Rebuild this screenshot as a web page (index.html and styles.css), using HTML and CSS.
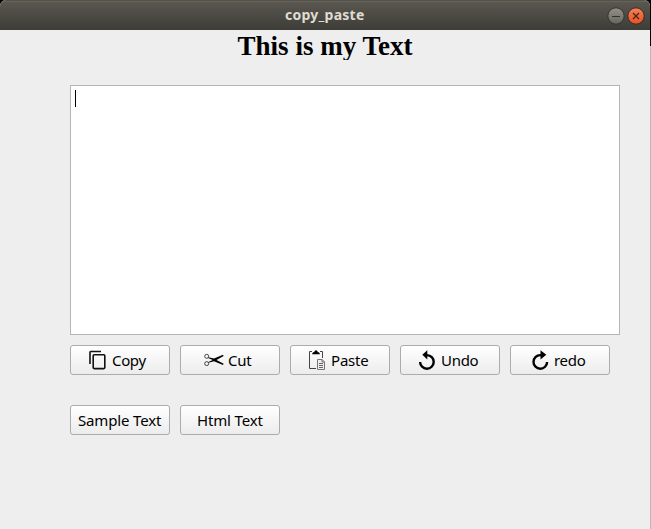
FILE: index.html
```html
<!DOCTYPE html>
<html lang="en">
<head>
<meta charset="utf-8">
<title>copy_paste</title>
<link rel="stylesheet" href="styles.css">
</head>
<body>
<div class="window">
  <header class="titlebar">
    <span class="title">copy_paste</span>
    <div class="controls">
      <svg class="control" viewBox="0 0 18 18"><defs><linearGradient id="g" x2="0" y2="1"><stop stop-color="#92918a"/><stop offset="1" stop-color="#65645e"/></linearGradient></defs><circle cx="9" cy="9" r="8.2" fill="url(#g)" stroke="#33322d"/><path d="M5 9.5h8" stroke="#33322d" stroke-width="1"/></svg>
      <svg class="control" viewBox="0 0 18 18"><defs><linearGradient id="r" x2="0" y2="1"><stop stop-color="#f58158"/><stop offset="1" stop-color="#e6501f"/></linearGradient></defs><circle cx="9" cy="9" r="8.2" fill="url(#r)" stroke="#3a2c25"/><path d="M6 6l6 6M12 6l-6 6" stroke="#40241a" stroke-width="1.2"/></svg>
    </div>
  </header>
  <main class="content">
    <h1 class="heading">This is my Text</h1>
    <div class="editor"><span class="caret"></span></div>
    <div class="row">
      <div class="button copy">
        <svg class="icon" viewBox="0 0 20 20"><path d="M2 14V2.2Q2 1.5 2.7 1.5H13" fill="none" stroke="#111" stroke-width="1.6"/><rect x="5.2" y="4.8" width="11.6" height="13.8" rx="1" fill="none" stroke="#111" stroke-width="1.6"/></svg>
        <span class="label">Copy</span>
      </div>
      <div class="button cut">
        <svg class="icon" viewBox="0 0 20 20"><g fill="none" stroke="#333" stroke-width=".9"><circle cx="2.7" cy="6.3" r="2"/><circle cx="2.7" cy="13.6" r="2"/></g><path d="M4.3 7.2L10 8.6l9-3.9.6 1.2-7.1 4 7.1 3.8-.6 1.2-9-3.7-5.7 1.6.2-.9 4.2-2-4.5-1.8z" fill="#000"/></svg>
        <span class="label">Cut</span>
      </div>
      <div class="button paste">
        <svg class="icon" viewBox="0 0 20 20"><path d="M4 1.5H1.5v17H8M12 1.5h2.5V8" fill="none" stroke="#444"/><path d="M4 4.3l1-2.1h1.2Q6.5.3 8 .3t1.8 1.9H11l1 2.1z" fill="#000"/><path d="M9.5 9.5h4.7l2.3 2.5v7.5h-7z" fill="#eee" stroke="#777"/><path d="M14 9.5V12h2.5" fill="none" stroke="#777"/><path d="M11 13.5h4M11 15.5h4M11 17.5h4" stroke="#666" stroke-width="1"/></svg>
        <span class="label">Paste</span>
      </div>
      <div class="button undo">
        <svg class="icon" viewBox="0 0 20 20"><path d="M9 5.1A6.8 6.8 0 1 1 2.1 11.9" fill="none" stroke="#000" stroke-width="2.4"/><path d="M9.3.2v9.2L4.3 4.8z"/></svg>
        <span class="label">Undo</span>
      </div>
      <div class="button redo">
        <svg class="icon" viewBox="0 0 20 20"><path d="M10.5 5.1H9.2a6.8 6.8 0 1 0 6.9 6.9" fill="none" stroke="#000" stroke-width="2.4"/><path d="M9.5.2v9.2l5.8-4.6z"/></svg>
        <span class="label">redo</span>
      </div>
    </div>
    <div class="row second">
      <div class="button sample"><span class="label">Sample Text</span></div>
      <div class="button html"><span class="label">Html Text</span></div>
    </div>
  </main>
</div>
</body>
</html>
```
FILE: styles.css
```css
* { box-sizing: border-box; }
body {
  margin: 0;
  background: linear-gradient(#000 0 46px, #b8b8b8 46px);
  font: 15px/20px "Noto Sans", sans-serif;
  color: #000;
}
.window { width: 650px; height: 529px; overflow: hidden; background: #eee; border-radius: 6px 6px 0 0; }
.titlebar {
  display: flex;
  align-items: center;
  justify-content: flex-end;
  height: 30px;
  padding-right: 5px;
  border-top: 1px solid #55524a;
  background: linear-gradient(#66635a 0 1px, #5a5750 1px, #3d3c37);
}
.title {
  flex: 1;
  padding: 0 0 2px 285px;
  font: bold 14px/26px "Noto Sans", sans-serif;
  letter-spacing: 0.25px;
  color: #dfdbd2;
}
.controls { display: flex; gap: 2px; }
.control { width: 18px; height: 18px; display: block; }
.content { display: flex; flex-direction: column; }
.heading {
  height: 30px;
  margin: 0 0 25px;
  overflow: hidden;
  font: bold 27px/32px "Liberation Serif", serif;
  text-align: center;
}
.editor { width: 550px; height: 250px; margin-left: 70px; padding: 4px; border: 1px solid #b6b6b6; background: #fff; }
.caret { display: block; width: 1px; height: 17px; background: #000; }
.row { display: flex; gap: 10px; margin: 10px 0 0 70px; }
.second { margin-top: 30px; }
.button {
  display: flex;
  align-items: center;
  width: 100px;
  height: 30px;
  border: 1px solid #acacac;
  border-radius: 3px;
  background: linear-gradient(#fff, #ececec);
  white-space: nowrap;
}
.icon { width: 20px; height: 20px; flex: none; margin-right: 4px; }
.copy { padding-left: 17px; letter-spacing: -0.35px; }
.cut { padding-left: 23px; letter-spacing: -0.3px; }
.paste { padding-left: 17px; letter-spacing: -0.2px; }
.paste .icon { margin-right: 3px; }
.undo { padding-left: 17px; letter-spacing: -0.3px; }
.undo .icon { margin-right: 3px; }
.redo { padding-left: 20px; letter-spacing: -0.3px; }
.redo .icon { margin-right: 3px; }
.sample { padding-left: 7px; letter-spacing: -0.15px; }
.html { padding-left: 16px; letter-spacing: -0.15px; }
```
